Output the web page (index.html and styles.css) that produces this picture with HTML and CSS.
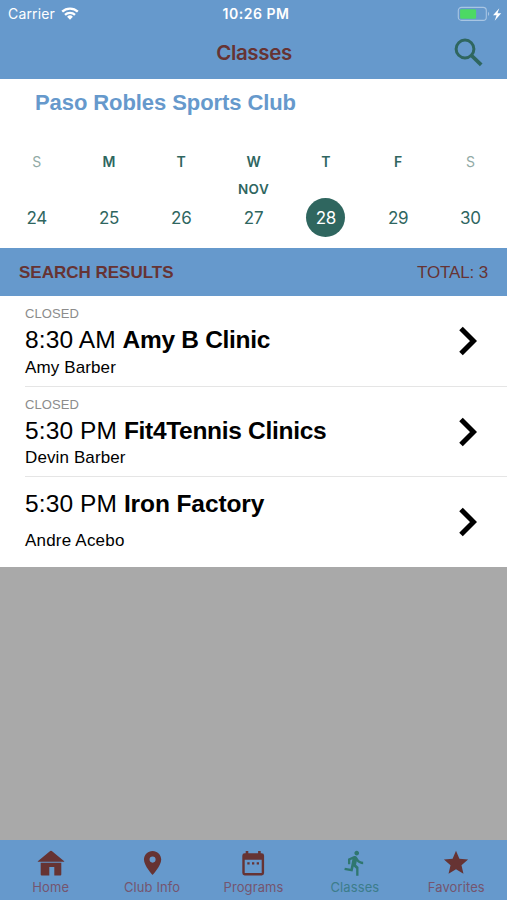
FILE: index.html
```html
<!DOCTYPE html>
<html lang="en">
<head>
<meta charset="utf-8">
<title>Classes</title>
<link rel="stylesheet" href="styles.css">
</head>
<body>
<div class="app">
  <header class="top">
    <div class="status">
      <div class="carrier"><span>Carrier</span>
        <svg width="18" height="14" viewBox="0 0 18 14"><g fill="none" stroke="#fff" stroke-width="2.3"><path d="M1.2 4.700a11.2 11.2 0 0 1 15.6 0"/><path d="M4 7.800a7.2 7.2 0 0 1 10 0"/></g><path fill="#fff" d="M9 12.700L6.1 9.800a4.1 4.1 0 0 1 5.8 0z"/></svg>
      </div>
      <div class="clock">10:26 PM</div>
      <svg class="battery" width="46" height="16" viewBox="0 0 46 16"><rect x="1.300" y="1.4" width="28" height="13" rx="3.2" fill="none" stroke="#a8c5e3" stroke-width="1.1"/><rect x="3.100" y="3.2" width="16" height="9.6" rx="1.4" fill="#4cd964"/><path d="M31 5.700q2.400 2.200 0 4.400z" fill="#a8c5e3"/><path d="M42.300 2.300L36 9.300h3.600l-1.900 5.400L44.200 7.300h-3.700z" fill="#fff"/></svg>
    </div>
    <div class="titlebar">
      <h1>Classes</h1>
      <svg class="search" width="30" height="30" viewBox="0 0 30 30" fill="none" stroke="#2f665f"><circle cx="11" cy="11" r="8.900" stroke-width="3"/><path d="M17.500 17.500L27.200 26.800" stroke-width="3.800"/></svg>
    </div>
  </header>
  <section class="calendar">
    <h2>Paso Robles Sports Club</h2>
    <div class="week">
      <div class="day weekend"><b>S</b><i></i><span>24</span></div>
      <div class="day"><b>M</b><i></i><span>25</span></div>
      <div class="day"><b>T</b><i></i><span>26</span></div>
      <div class="day"><b>W</b><i>NOV</i><span>27</span></div>
      <div class="day selected"><b>T</b><i></i><span>28</span></div>
      <div class="day"><b>F</b><i></i><span>29</span></div>
      <div class="day weekend"><b>S</b><i></i><span>30</span></div>
    </div>
  </section>
  <div class="results"><strong>SEARCH RESULTS</strong><span>TOTAL: 3</span></div>
  <main>
    <article class="row"><div class="info"><div class="closed">CLOSED</div><div class="name"><span>8:30 AM</span> <b>Amy B Clinic</b></div><div class="coach">Amy Barber</div></div><svg class="chevron" viewBox="0 0 18 30"><path d="M2 2.500L14.500 15 2 27.500"/></svg></article>
    <article class="row"><div class="info"><div class="closed">CLOSED</div><div class="name"><span>5:30 PM</span> <b>Fit4Tennis Clinics</b></div><div class="coach">Devin Barber</div></div><svg class="chevron" viewBox="0 0 18 30"><path d="M2 2.500L14.500 15 2 27.500"/></svg></article>
    <article class="row open"><div class="info"><div class="name"><span>5:30 PM</span> <b>Iron Factory</b></div><div class="coach">Andre Acebo</div></div><svg class="chevron" viewBox="0 0 18 30"><path d="M2 2.500L14.500 15 2 27.500"/></svg></article>
  </main>
  <nav class="tabs">
    <div class="tab"><svg viewBox="0 0 28 28"><path d="M14 1.700q.4 0 .8.400L27.200 12.200v.600H.8v-.600L13.200 2.100q.4-.400.8-.400z"/><path d="M3.700 13.800h20.600V25.500q0 1-1 1h-6V18h-5v8.500h-7.600q-1 0-1-1z"/></svg><span>Home</span></div>
    <div class="tab"><svg viewBox="0 0 24 24"><path d="M12.500 1.700c-4.100 0-7.400 3.300-7.400 7.400 0 5.400 7.400 13.200 7.400 13.200s7.400-7.800 7.400-13.200c0-4.100-3.300-7.400-7.400-7.400zm0 10a2.600 2.600 0 1 1 0-5.200 2.600 2.600 0 0 1 0 5.200z"/></svg><span>Club Info</span></div>
    <div class="tab"><svg viewBox="0 0 28 28"><path fill-rule="evenodd" d="M6.700 2h2.600v2.300h9.800V2h2.600v2.300h1q2.400 0 2.400 2.400V24q0 2.400-2.400 2.400h-17Q3.300 26.400 3.300 24V6.700q0-2.400 2.400-2.400h1zM5.700 10.800V24h17V10.800zM8.300 13.300h2.300v2.300H8.300zm4.700 0h2.300v2.300H13zm4.700 0H20v2.300h-2.300z"/></svg><span>Programs</span></div>
    <div class="tab active"><svg viewBox="0 0 24 24"><path d="M13.490 5.480c1.100 0 2-.9 2-2s-.9-2-2-2-2 .9-2 2 .9 2 2 2zm-3.600 13.900l1-4.400 2.100 2v6h2v-7.500l-2.100-2 .6-3c1.300 1.500 3.300 2.500 5.500 2.500v-2c-1.900 0-3.500-1-4.300-2.400l-1-1.600c-.4-.6-1-1-1.700-1-.3 0-.5.1-.8.1l-5.200 2.200v4.700h2v-3.400l1.800-.7-1.600 8.100-4.900-1-.4 2 7 1.400z"/></svg><span>Classes</span></div>
    <div class="tab"><svg viewBox="0.400 0.500 23.200 23.200"><path d="M12 17.270L18.180 21l-1.640-7.030L22 9.240l-7.190-.61L12 2 9.190 8.630 2 9.240l5.460 4.730L5.820 21z"/></svg><span>Favorites</span></div>
  </nav>
</div>
</body>
</html>
```
FILE: styles.css
```css
* { box-sizing: border-box; }
body { margin: 0; }
h1, h2 { margin: 0; }
svg { display: block; flex: none; }
.app {
  width: 507px;
  height: 900px;
  display: flex;
  flex-direction: column;
  background: #a9a9a9;
  font-family: "Liberation Sans", Arial, sans-serif;
  overflow: hidden;
}
.top { height: 79px; background: #6699cc; }
.status {
  height: 26px;
  padding: 0 4px 0 8px;
  display: grid;
  grid-template-columns: 1fr auto 1fr;
  align-items: center;
  color: #fff;
  font: 14px/26px Inter, sans-serif;
}
.carrier { display: flex; gap: 6px; align-items: center; }
.carrier span { letter-spacing: .15px; }
.clock { font-weight: 600; font-size: 14px; letter-spacing: .55px; margin-left: 1px; padding-top: 1px; }
.battery { justify-self: end; }
.titlebar {
  height: 53px;
  padding: 0 23px;
  display: grid;
  grid-template-columns: 1fr auto 1fr;
  align-items: center;
}
h1 { grid-column: 2; margin-left: 1px; font: 600 20.500px/53px Inter, sans-serif; letter-spacing: -.35px; color: #663333; }
.search { justify-self: end; }
.calendar { height: 168.500px; background: #fff; }
h2 { padding: 10px 0 0 35px; font-size: 22px; line-height: 28px; letter-spacing: -.08px; color: #6699cc; }
.week { display: grid; grid-template-columns: repeat(7, 72.300px); padding: 33px 0 0 .500px; }
.day {
  display: flex;
  flex-direction: column;
  align-items: center;
  font-family: Inter, sans-serif;
  color: #2f665f;
}
.day b { font-size: 14px; line-height: 24px; font-weight: 600; }
.day i { height: 24px; font: 600 13.500px/30px Inter, sans-serif; letter-spacing: .4px; }
.day span { width: 39px; height: 39px; border-radius: 50%; text-align: center; font-size: 17px; line-height: 40px; letter-spacing: -.3px; }
.weekend b { font-weight: 400; color: #91aaa5; }
.selected span { background: #2f665f; color: #fff; }
.results {
  height: 48.500px;
  padding: 0 19px;
  display: flex;
  justify-content: space-between;
  background: #6699cc;
  color: #663333;
  font-size: 17px;
  line-height: 49px;
}
.results span { letter-spacing: -.15px; }
.row {
  height: 90.500px;
  margin-left: 25px;
  padding: 1px 30px 0 0;
  display: flex;
  justify-content: space-between;
  align-items: center;
  border-bottom: 1px solid #e5e5e5;
}
main { height: 270.500px; background: #fff; }
.info { height: 90px; padding-top: 10px; white-space: nowrap; color: #000; }
.closed { font-size: 13px; line-height: 16px; color: #8c8c8c; letter-spacing: .1px; }
.name { font-size: 24.500px; line-height: 36.500px; }
.name span { letter-spacing: .12px; }
.name b { letter-spacing: -.3px; }
.coach { font-size: 17px; line-height: 17px; letter-spacing: .12px; }
.open { height: 89.500px; border: 0; }
.open .info { padding-top: 9px; }
.open .name b { letter-spacing: -.1px; }
.open .coach { padding-top: 9px; letter-spacing: .2px; }
.chevron { width: 18px; height: 30px; fill: none; stroke: #000; stroke-width: 5; }
.tabs {
  height: 60px;
  margin-top: auto;
  padding-top: 9px;
  display: grid;
  grid-template-columns: repeat(5, 1fr);
  background: #6699cc;
  color: #75556f;
  font: 13px/20px Inter, sans-serif;
  letter-spacing: .1px;
}
.tab { display: flex; flex-direction: column; align-items: center; }
.tab svg { width: 28px; height: 28px; fill: #663333; }
.tab.active { color: #3c7d8b; }
.tab.active svg { fill: #2f776f; }
```
